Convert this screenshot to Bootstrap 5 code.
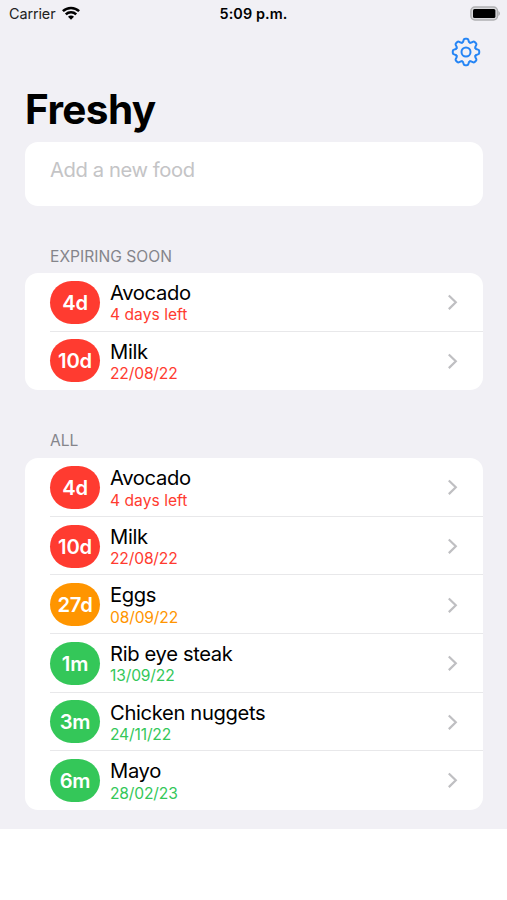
<!DOCTYPE html>
<html lang="en">
<head>
<meta charset="utf-8">
<meta name="viewport" content="width=device-width, initial-scale=1">
<title>Freshy</title>
<link href="https://cdn.jsdelivr.net/npm/bootstrap@5.3.0/dist/css/bootstrap.min.css" rel="stylesheet">
<style>
body{font-family:Inter,"Liberation Sans",sans-serif;color:#000;background:#fff}
.screen{height:829px;background:#f1f0f5}
.status{height:28px;font-size:14.4px;line-height:28px;padding:0 7px 0 9px}
.status>div{flex:1 1 0}
.carrier{color:#222;letter-spacing:-.1px}
.carrier svg{margin:-2px 0 0 7px}
.clock{font-weight:600;letter-spacing:.1px;padding-right:2px}
.toolbar{height:48px;padding:9px 26px 0 0}
.title{font-size:40.5px;line-height:50px;font-weight:700;letter-spacing:-.6px;margin:9px 0 7px 25px}
.panel{margin:0 24px 0 25px;background:#fff;border-radius:13px}
.entry{height:64px;padding:13px 25px;font-size:20.2px;line-height:30px;letter-spacing:-.4px;color:#c4c4c6}
.heading{font-size:15.6px;line-height:20px;font-weight:400;letter-spacing:.02px;color:#85858b;margin:0 0 0 50px}
.food{height:58.6px;padding:0 25px 0 25px}
.food:not(:last-child){background:linear-gradient(#e8e8ea,#e8e8ea) 25px 100%/100% 1px no-repeat}
.pill{width:50px;height:43px;border-radius:21.5px;color:#fff;font-size:20.2px;font-weight:600;letter-spacing:-.2px;margin-right:10px;padding-top:1.500px}
.details{padding-top:3px}
.name{font-size:20.2px;line-height:22.400px;letter-spacing:-.35px}
.due{font-size:15.6px;line-height:21.200px;letter-spacing:-.15px}
.wordy{letter-spacing:.03px}
.red{background:#ff3b30}.orange{background:#ff9500}.green{background:#34c759}
.t-red{color:#ff3b30}.t-orange{color:#ff9500}.t-green{color:#34c759}
svg{display:block}
</style>
</head>
<body>
<svg width="0" height="0" class="position-absolute" aria-hidden="true">
<symbol id="chev" viewBox="0 0 11 18"><path d="M1.800 2.500 8.800 9.300l-7 6.800" fill="none" stroke="#bfbfc2" stroke-width="2.200"/></symbol>
</svg>
<main class="screen overflow-hidden">
<div class="status d-flex align-items-center">
<div class="carrier d-flex align-items-center"><span>Carrier</span>
<svg width="18" height="14" viewBox="0 0 18 14"><g fill="none" stroke="#000" stroke-width="2.500"><path d="M.9 5.200a11.600 11.600 0 0 1 16.200 0"/><path d="M3.800 8.400a7.400 7.400 0 0 1 10.400 0"/></g><path d="M9 13.800 6 10.700a4.200 4.200 0 0 1 6 0z"/></svg></div>
<div class="clock text-center text-nowrap">5:09 p.m.</div>
<div class="d-flex justify-content-end"><svg width="30" height="16" viewBox="0 0 30 16"><rect x=".9" y="1" width="26.600" height="13" rx="4" fill="#d9d9dc" stroke="#b0b0b2" stroke-width="1.500"/><rect x="3" y="3" width="22.400" height="9" rx="1.500" fill="#000"/><path d="M28.300 5.100q1.700.7 1.700 2.400t-1.700 2.400z" fill="#b0b0b2"/></svg></div>
</div>
<div class="toolbar d-flex justify-content-end">
<svg width="30" height="30" viewBox="-15 -15 30 30" fill="none" stroke="#2585f5" stroke-width="2" stroke-linecap="round">
<defs><path id="tooth" d="M-3.900-9.400Q-2.900-9.800-2.700-10.800L-2.400-12Q-2.100-13.200-.9-13.200H.9Q2.100-13.200 2.400-12L2.700-10.800Q2.900-9.800 3.900-9.400"/></defs>
<use href="#tooth"/><use href="#tooth" transform="rotate(45)"/><use href="#tooth" transform="rotate(90)"/><use href="#tooth" transform="rotate(135)"/><use href="#tooth" transform="rotate(180)"/><use href="#tooth" transform="rotate(225)"/><use href="#tooth" transform="rotate(270)"/><use href="#tooth" transform="rotate(315)"/><circle r="4.500"/></svg>
</div>
<h1 class="title">Freshy</h1>
<div class="panel entry">Add a new food</div>
<h2 class="heading" style="margin-top:41px;margin-bottom:6px">EXPIRING SOON</h2>
<section class="panel">
<div class="food d-flex align-items-center"><div class="pill red d-flex align-items-center justify-content-center">4d</div><div class="details flex-grow-1"><div class="name">Avocado</div><div class="due wordy t-red">4 days left</div></div><svg width="11" height="18"><use href="#chev"/></svg></div>
<div class="food d-flex align-items-center"><div class="pill red d-flex align-items-center justify-content-center">10d</div><div class="details flex-grow-1"><div class="name">Milk</div><div class="due t-red">22/08/22</div></div><svg width="11" height="18"><use href="#chev"/></svg></div>
</section>
<h2 class="heading" style="margin-top:40.500px;margin-bottom:7.500px">ALL</h2>
<section class="panel">
<div class="food d-flex align-items-center"><div class="pill red d-flex align-items-center justify-content-center">4d</div><div class="details flex-grow-1"><div class="name">Avocado</div><div class="due wordy t-red">4 days left</div></div><svg width="11" height="18"><use href="#chev"/></svg></div>
<div class="food d-flex align-items-center"><div class="pill red d-flex align-items-center justify-content-center">10d</div><div class="details flex-grow-1"><div class="name">Milk</div><div class="due t-red">22/08/22</div></div><svg width="11" height="18"><use href="#chev"/></svg></div>
<div class="food d-flex align-items-center"><div class="pill orange d-flex align-items-center justify-content-center">27d</div><div class="details flex-grow-1"><div class="name">Eggs</div><div class="due t-orange">08/09/22</div></div><svg width="11" height="18"><use href="#chev"/></svg></div>
<div class="food d-flex align-items-center"><div class="pill green d-flex align-items-center justify-content-center">1m</div><div class="details flex-grow-1"><div class="name">Rib eye steak</div><div class="due t-green">13/09/22</div></div><svg width="11" height="18"><use href="#chev"/></svg></div>
<div class="food d-flex align-items-center"><div class="pill green d-flex align-items-center justify-content-center">3m</div><div class="details flex-grow-1"><div class="name">Chicken nuggets</div><div class="due t-green">24/11/22</div></div><svg width="11" height="18"><use href="#chev"/></svg></div>
<div class="food d-flex align-items-center"><div class="pill green d-flex align-items-center justify-content-center">6m</div><div class="details flex-grow-1"><div class="name">Mayo</div><div class="due t-green">28/02/23</div></div><svg width="11" height="18"><use href="#chev"/></svg></div>
</section>
</main>
<script src="https://cdn.jsdelivr.net/npm/bootstrap@5.3.0/dist/js/bootstrap.bundle.min.js"></script>
</body>
</html>
